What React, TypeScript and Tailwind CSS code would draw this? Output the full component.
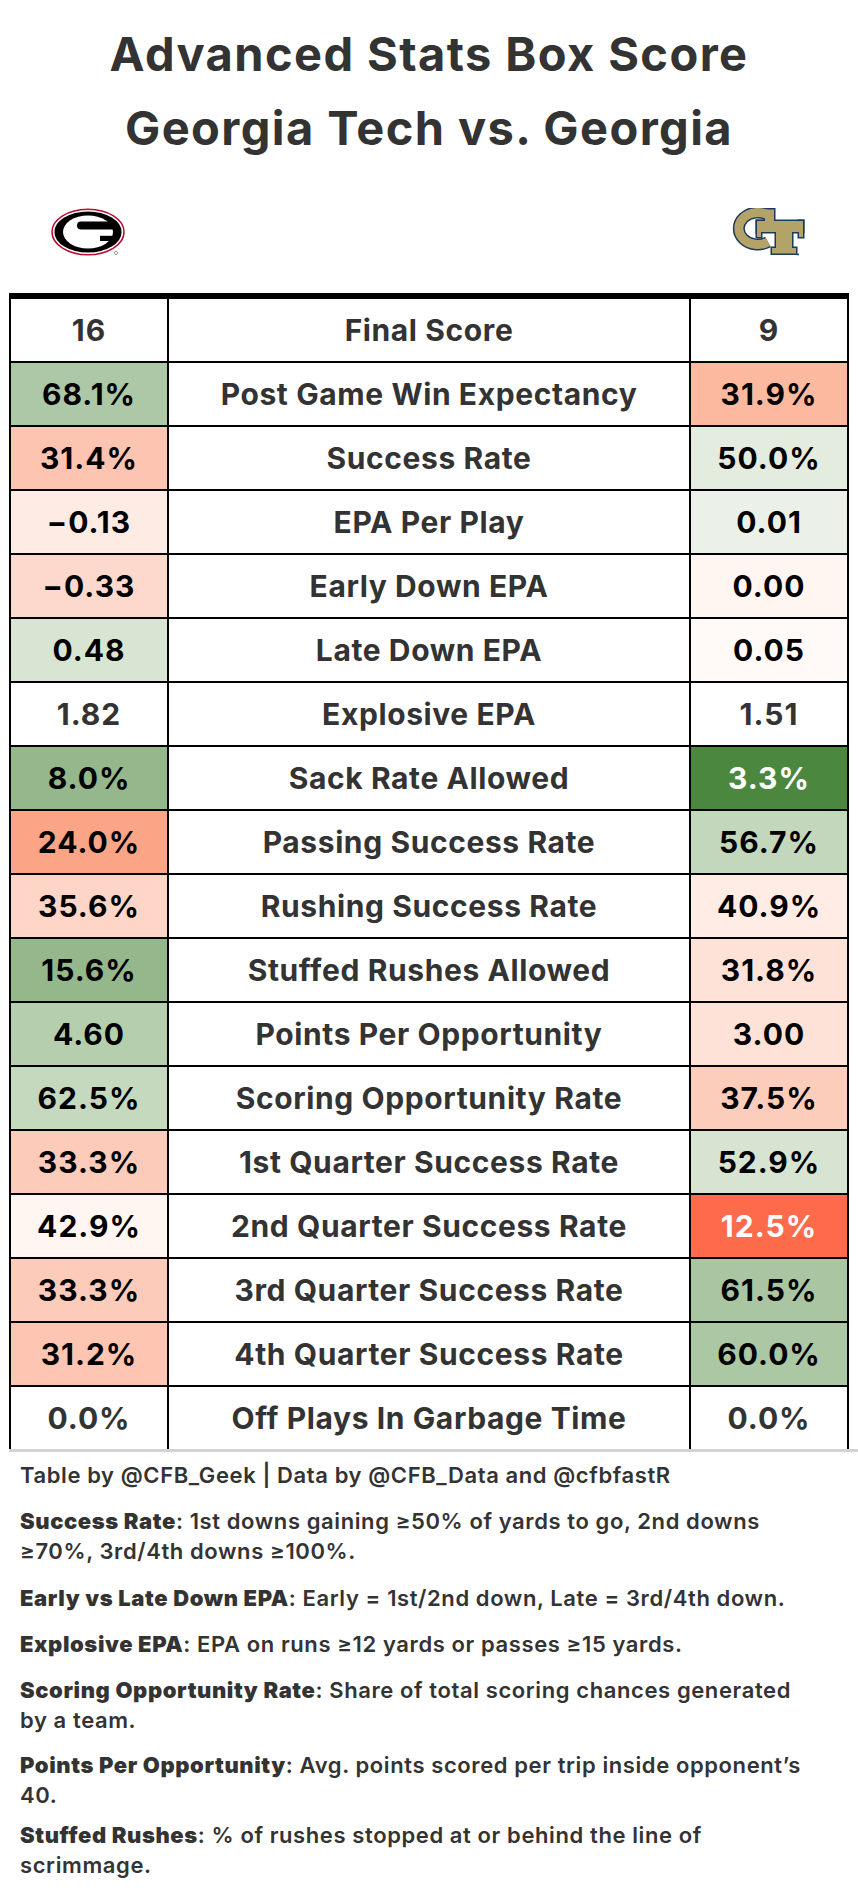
import React from "react";

type Row = {
  label: string;
  a: string;
  b: string;
  ac?: string;
  bc?: string;
  aw?: boolean;
  bw?: boolean;
};

const rows: Row[] = [
  { label: "Final Score", a: "16", b: "9" },
  { label: "Post Game Win Expectancy", a: "68.1%", b: "31.9%", ac: "#adc8a6", bc: "#fdb9a0" },
  { label: "Success Rate", a: "31.4%", b: "50.0%", ac: "#fdc4b1", bc: "#e3ecdf" },
  { label: "EPA Per Play", a: "\u22120.13", b: "0.01", ac: "#feebe4", bc: "#ebf1e8" },
  { label: "Early Down EPA", a: "\u22120.33", b: "0.00", ac: "#fdd9cd", bc: "#fff5f1" },
  { label: "Late Down EPA", a: "0.48", b: "0.05", ac: "#d8e5d3", bc: "#fffaf7" },
  { label: "Explosive EPA", a: "1.82", b: "1.51" },
  { label: "Sack Rate Allowed", a: "8.0%", b: "3.3%", ac: "#94b78b", bc: "#4b873e", bw: true },
  { label: "Passing Success Rate", a: "24.0%", b: "56.7%", ac: "#fca486", bc: "#c2d7bc" },
  { label: "Rushing Success Rate", a: "35.6%", b: "40.9%", ac: "#fed5c7", bc: "#ffece5" },
  { label: "Stuffed Rushes Allowed", a: "15.6%", b: "31.8%", ac: "#94b78b", bc: "#fee2d8" },
  { label: "Points Per Opportunity", a: "4.60", b: "3.00", ac: "#b5cfae", bc: "#fee2d8" },
  { label: "Scoring Opportunity Rate", a: "62.5%", b: "37.5%", ac: "#c5d9bf", bc: "#fdcdbb" },
  { label: "1st Quarter Success Rate", a: "33.3%", b: "52.9%", ac: "#fdcbb9", bc: "#d7e4d2" },
  { label: "2nd Quarter Success Rate", a: "42.9%", b: "12.5%", ac: "#fff5f1", bc: "#fd6b4b", bw: true },
  { label: "3rd Quarter Success Rate", a: "33.3%", b: "61.5%", ac: "#fdcbb9", bc: "#a9c5a1" },
  { label: "4th Quarter Success Rate", a: "31.2%", b: "60.0%", ac: "#fdc5b2", bc: "#abc7a4" },
  { label: "Off Plays In Garbage Time", a: "0.0%", b: "0.0%" },
];

const FONT = { fontFamily: "Inter, Roboto, 'Liberation Sans', sans-serif" };

function UgaLogo() {
  return (
    <svg width="76" height="49" viewBox="0 0 76 49">
      <ellipse cx="37" cy="24" rx="36" ry="22.8" fill="#ffffff" stroke="#ba0c2f" strokeWidth="1.6" />
      <ellipse cx="37" cy="24" rx="33.6" ry="20.6" fill="#000000" />
      <ellipse cx="37" cy="24" rx="25" ry="16.5" fill="#ffffff" />
      <path d="M30 13.5 H66 V21.5 H30 A4 4 0 0 1 30 13.5 Z" fill="#000000" />
      <path d="M49 27.8 H66 V33 H49 Z" fill="#000000" />
      <circle cx="65" cy="45" r="1.6" fill="none" stroke="#555" strokeWidth="0.6" />
    </svg>
  );
}

function GtLogo() {
  const navy = "#1b3a5c";
  const gold = "#b3a369";
  const shapes = (
    <>
      <rect x="34" y="1.5" width="9" height="15" />
      <rect x="26" y="13" width="46" height="11" />
      <rect x="26" y="13" width="4" height="16" />
      <rect x="68" y="13" width="4" height="16" />
      <rect x="45" y="23" width="16" height="19" />
      <rect x="41" y="40" width="24" height="5.5" />
    </>
  );
  return (
    <svg width="76" height="48" viewBox="0 0 76 48">
      <path d="M37 7 A19 16 0 1 0 37 34" fill="none" stroke={navy} strokeWidth="12" />
      <g fill={navy} stroke={navy} strokeWidth="3">{shapes}</g>
      <path d="M37 7 A19 16 0 1 0 37 34" fill="none" stroke={gold} strokeWidth="9" />
      <g fill={gold}>{shapes}</g>
      <circle cx="67" cy="46.5" r="1" fill={navy} />
    </svg>
  );
}

function Cell({ v, bg, white }: { v: string; bg?: string; white?: boolean }) {
  return (
    <div
      className="w-[156px] shrink-0 flex items-center justify-center text-[30px] font-bold tracking-[1px]"
      style={{ backgroundColor: bg || "#ffffff", color: white ? "#ffffff" : bg ? "#000000" : "#333333" }}
    >
      {v}
    </div>
  );
}

export default function App() {
  return (
    <div className="w-[858px] bg-white text-[#333333] pb-[20px]" style={FONT}>
      <div className="pt-[17px] text-center text-[47px] leading-[74px] font-bold tracking-[1.4px]">
        <div>Advanced Stats Box Score</div>
        <div>Georgia Tech vs. Georgia</div>
      </div>

      <div className="ml-[9px] w-[840px] h-[128px] flex">
        <div className="w-[160px] flex justify-center pt-[43px]">
          <UgaLogo />
        </div>
        <div className="flex-1" />
        <div className="w-[160px] flex justify-center pt-[43px]">
          <GtLogo />
        </div>
      </div>

      <div className="ml-[9px] w-[840px] border-t-[6px] border-l-2 border-r-2 border-black">
        {rows.map((r, i) => (
          <div
            key={i}
            className={
              i === rows.length - 1
                ? "flex h-[62px]"
                : "flex h-[64px] border-b-2 border-black"
            }
          >
            <Cell v={r.a} bg={r.ac} white={r.aw} />
            <div className="w-[2px] bg-black shrink-0" />
            <div className="flex-1 flex items-center justify-center text-[30px] font-bold tracking-[0.6px] text-[#333333]">
              {r.label}
            </div>
            <div className="w-[2px] bg-black shrink-0" />
            <Cell v={r.b} bg={r.bc} white={r.bw} />
          </div>
        ))}
      </div>

      <div className="ml-[9px] w-[849px] border-t-[3px] border-[#d3d3d3] pl-[11px] pt-[8px] text-[22px] leading-[30px] font-semibold tracking-[0.6px] text-[#333333]">
        <p>Table by @CFB_Geek | Data by @CFB_Data and @cfbfastR</p>
        <p className="mt-[16px]">
          <span className="font-black">Success Rate</span>: 1st downs gaining ≥50% of yards to go, 2nd downs
          <br />
          ≥70%, 3rd/4th downs ≥100%.
        </p>
        <p className="mt-[17px]">
          <span className="font-black">Early vs Late Down EPA</span>: Early = 1st/2nd down, Late = 3rd/4th down.
        </p>
        <p className="mt-[16px]">
          <span className="font-black">Explosive EPA</span>: EPA on runs ≥12 yards or passes ≥15 yards.
        </p>
        <p className="mt-[16px]">
          <span className="font-black">Scoring Opportunity Rate</span>: Share of total scoring chances generated
          <br />
          by a team.
        </p>
        <p className="mt-[15px]">
          <span className="font-black">Points Per Opportunity</span>: Avg. points scored per trip inside opponent’s
          <br />
          40.
        </p>
        <p className="mt-[10px]">
          <span className="font-black">Stuffed Rushes</span>: % of rushes stopped at or behind the line of
          <br />
          scrimmage.
        </p>
      </div>
    </div>
  );
}
